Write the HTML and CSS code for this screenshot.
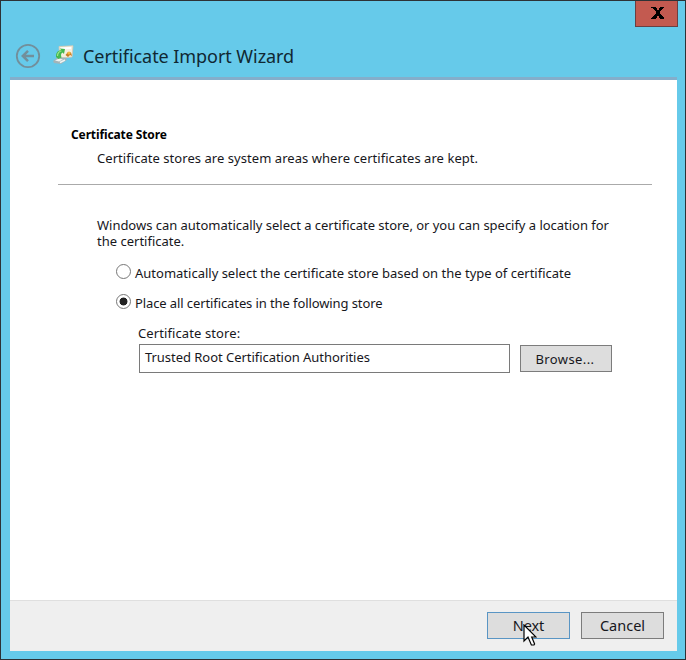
FILE: index.html
```html
<!DOCTYPE html>
<html lang="en">
<head>
<meta charset="utf-8">
<title>Certificate Import Wizard</title>
<link rel="stylesheet" href="styles.css">
</head>
<body>
<div class="window">
  <button class="close" aria-label="Close">
    <svg width="14" height="12" viewBox="0 0 14 12"><path d="M0 0h5v1h1v2h2V1h1V0h4v1h-1v1h-1v1h-1v1H9v3h1v1h1v1h1v1h1v2H9v-1H8V9H6v2H5v1H0v-1h1v-1h1V9h1V8h1V7h1V4H4V3H3V2H2V1H0z"/></svg>
  </button>
  <header class="titlebar">
    <svg class="back" width="26" height="26" viewBox="0 0 26 26" fill="none" stroke="#728f9b"><circle cx="13" cy="13" r="11.2" stroke-width="1.8"/><path d="M19 13H8M13 7.8 7.8 13l5.2 5.2" stroke-width="2.5"/></svg>
    <svg class="cert" width="22" height="20" viewBox="0 0 22 20">
      <path d="M6 1.5 20 .8 19 12l-12 1z" fill="#f5efdf" stroke="#d6c8ae" stroke-width=".8"/>
      <path d="M8 3.5 18 3" stroke="#fff" stroke-width="2"/>
      <path d="m12.5 10 2.5-3 3 .5 1 3.5-2-1-2 2z" fill="#c87a22"/><circle cx="16" cy="8" r="1.6" fill="#f4b73d"/>
      <path d="m0 16 5-4 8 1 1 2-6 4-7-1z" fill="#a3b4b8"/><path d="m2 15.5 4-2 4 1-4 2z" fill="#f1f4f2"/><path d="m7 17.5 5-2.5" stroke="#eef3f3" stroke-width="1.5"/>
      <path d="M3 12c0-4 1-6 5-7l-1-1.5 5 .5-1 5-1.5-1.5c-2 1-1.5 3-1 5l-3 1.5z" fill="#45b950"/><path d="M4.500 11c0-3 2-5 4-5" fill="none" stroke="#9be58b" stroke-width="1.2"/>
    </svg>
    <h1><span>Certificate Import Wizard</span></h1>
  </header>
  <main class="page">
    <section class="content">
      <h2><span>Certificate Store</span></h2>
      <p class="subtitle"><span>Certificate stores are system areas where certificates are kept.</span></p>
      <hr>
      <p class="intro"><span class="lead">Windows can automatically select a certificate store, or you can specify a location for</span> <span>the certificate.</span></p>
      <div class="option auto"><i class="radio"></i><span>Automatically select the certificate store based on the type of certificate</span></div>
      <div class="option place"><i class="radio checked"></i><span>Place all certificates in the following store</span></div>
      <div class="store">
        <div class="label"><span>Certificate store:</span></div>
        <div class="row"><div class="field"><span>Trusted Root Certification Authorities</span></div><button class="btn browse"><span>Browse...</span></button></div>
      </div>
    </section>
    <footer>
      <button class="btn next"><span>Next</span>
        <svg class="cursor" width="14" height="23" viewBox="0 0 14 23"><path d="M1 1v16l4-4 3.4 8h2.6l.6-1L8.700 13H13z" fill="#fff" stroke="#000" stroke-width="1.2"/></svg>
      </button>
      <button class="btn"><span>Cancel</span></button>
    </footer>
  </main>
</div>
</body>
</html>
```
FILE: styles.css
```css
* { box-sizing: border-box; }
body { margin: 0; font: 13px/16px "Noto Sans", sans-serif; color: #17171c; }
h1, h2, p { margin: 0; font-weight: 400; }
button { font: inherit; color: inherit; padding: 0; border-radius: 0; }
span { display: block; white-space: nowrap; }
.window { position: relative; width: 686px; height: 660px; padding: 0 8px 8px 9px; background: #66caea; border: 1px solid #2d3236; display: flex; flex-direction: column; }
.close { position: absolute; top: 0; right: 7px; width: 43px; height: 26px; display: flex; align-items: center; justify-content: center; padding: 0 0 2px 2px; background: #c35a50; border: 1px solid #6b3f42; border-top: 0; }
.titlebar { height: 79px; padding: 34px 0 0 5px; display: flex; align-items: center; border-bottom: 3px solid #84aecb; }
.cert { margin-left: 12px; margin-top: -3px; }
h1 { margin-left: 8px; font-size: 18px; line-height: 24px; letter-spacing: -.06px; color: #102832; }
.page { flex: 1; background: #fff; display: flex; flex-direction: column; }
.content { flex: 1; padding: 47px 25px 0 48px; }
h2 { margin-left: 13px; font-size: 12px; line-height: 16px; letter-spacing: -.12px; font-weight: 700; color: #000; }
.subtitle { margin: 7px 0 0 39px; letter-spacing: .05px; }
hr { margin: 18px 0 0; height: 1px; border: 0; background: #aaa; }
.intro { margin: 32px 0 0 39px; }
.lead { letter-spacing: -.025px; }
.option { display: flex; align-items: flex-start; gap: 4px; height: 16px; margin: 16px 0 0 58px; }
.option + .option { margin-top: 14px; }
.radio { width: 15px; height: 15px; margin-top: -1px; border: 1px solid #777; border-radius: 50%; background: #fff; }
.place { letter-spacing: -.1px; }
.checked { background: radial-gradient(circle, #222 0 3.6px, #fff 4.3px); }
.store { margin: 14px 0 0 80px; }
.label { letter-spacing: .1px; }
.row { display: flex; align-items: center; gap: 10px; margin: 3px 0 0 1px; }
.field { width: 371px; height: 29px; border: 1px solid #7a7a7a; padding: 4px 5px; letter-spacing: -.04px; }
.btn { position: relative; width: 83px; height: 27px; background: #ddd; border: 1px solid #7c7c7c; }
.browse { width: 92px; letter-spacing: .4px; }
.browse span { margin-right: 2px; }
footer { height: 51px; padding: 0 13px 2px 0; display: flex; justify-content: flex-end; align-items: center; gap: 11px; background: #efefef; border-top: 1px solid #dfdfdf; font-size: 14.5px; }
.next { border-color: #5995c4; }
.next span { letter-spacing: -.1px; }
.cursor { position: absolute; left: 35px; top: 11px; }
```
